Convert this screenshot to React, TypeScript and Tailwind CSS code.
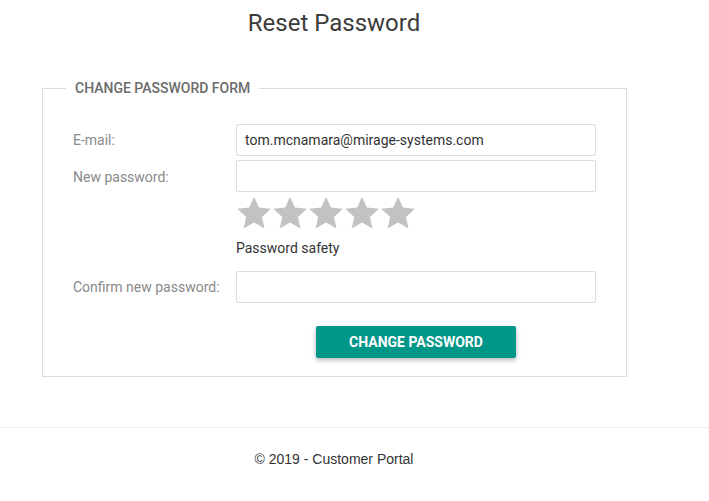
const Star = () => (
  <svg width="36" height="36" viewBox="0 0 24 24" className="block">
    <path
      fill="#c2c2c2"
      d="M12 1.2l3.3 7.2 7.9.8-5.9 5.4 1.7 7.8L12 18.4l-6.9 4 1.7-7.8L.9 9.2l7.9-.8z"
    />
  </svg>
);

export default function App() {
  const roboto = { fontFamily: 'Roboto, "Open Sans", sans-serif' };
  return (
    <div className="min-h-screen bg-white" style={roboto}>
      <div className="w-[668px]">
        <h1 className="pt-[9px] text-center text-[24px] leading-[28px] text-[#3c3c3c]">
          Reset Password
        </h1>

        <fieldset className="mx-[42px] mt-[43px] border border-[#dddddd] px-[30px] pb-[18px] pt-[28px]">
          <legend className="ml-[-7px] px-[9px] text-[14px] font-medium uppercase leading-[16px] text-[#6b6b6b]">
            Change password form
          </legend>

          <div className="flex items-center">
            <label className="w-[163px] text-[14px] text-[#8a8a8a]">E-mail:</label>
            <input
              type="text"
              defaultValue="tom.mcnamara@mirage-systems.com"
              className="h-[32px] w-[360px] rounded-[2px] border border-[#dcdcdc] px-[8px] text-[14px] text-[#333] outline-none"
            />
          </div>

          <div className="mt-[4px] flex">
            <label className="w-[163px] pt-[7px] text-[14px] text-[#8a8a8a]">New password:</label>
            <div>
              <input
                type="password"
                className="h-[32px] w-[360px] rounded-[2px] border border-[#dcdcdc] px-[8px] text-[14px] outline-none"
              />
              <div className="mt-[3px] flex">
                <Star />
                <Star />
                <Star />
                <Star />
                <Star />
              </div>
              <div className="mt-[9px] text-[14px] leading-[16px] text-[#333]">Password safety</div>
            </div>
          </div>

          <div className="mt-[15px] flex items-center">
            <label className="w-[163px] text-[14px] text-[#8a8a8a]">Confirm new password:</label>
            <input
              type="password"
              className="h-[32px] w-[360px] rounded-[2px] border border-[#dcdcdc] px-[8px] text-[14px] outline-none"
            />
          </div>

          <div className="mt-[23px] flex">
            <div className="w-[163px]" />
            <div className="flex w-[360px] justify-center">
              <button className="h-[32px] w-[200px] rounded-[2px] bg-[#009688] text-[14px] font-bold uppercase text-white shadow-[0_2px_5px_rgba(0,0,0,0.3)]">
                Change password
              </button>
            </div>
          </div>
        </fieldset>
      </div>

      <div className="mt-[50px] border-t border-[#eeeeee]">
        <div
          className="w-[668px] pt-[21px] text-center text-[14px] text-[#333]"
          style={{ fontFamily: '"Liberation Sans", Arial, sans-serif' }}
        >
          © 2019 - Customer Portal
        </div>
      </div>
    </div>
  );
}
